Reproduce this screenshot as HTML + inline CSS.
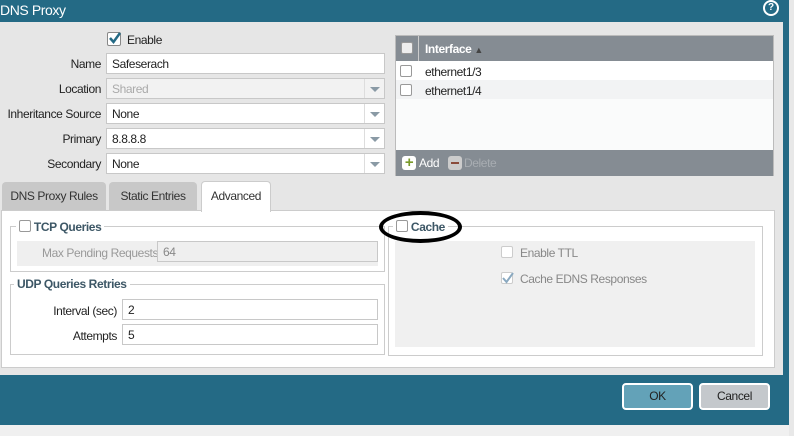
<!DOCTYPE html><html><head><style>
*{box-sizing:border-box;margin:0;padding:0;white-space:nowrap}
body{width:794px;height:436px;overflow:hidden;background:#f0f0f0;font-family:"Liberation Sans",sans-serif;font-size:12px;letter-spacing:-0.4px;color:#222;position:relative}
.a{position:absolute}
.lbl{position:absolute;text-align:right;width:101px;left:0}
.inp{position:absolute;background:#fff;border:1px solid #c8c8c8;padding:3px 5px;height:21px;line-height:14px;overflow:hidden}
.dd{position:absolute;right:0;top:0;width:20px;height:19px;border-left:1px solid #ddd}
.dd:after{content:"";position:absolute;left:5px;top:8px;border:5px solid transparent;border-top:5px solid #8a9aa5}
.cb{position:absolute;width:12px;height:12px;border:1px solid #999;background:#fff;border-radius:2px}
.fs{position:absolute;border:1px solid #ccc}
.leg{position:absolute;background:#fff;font-weight:bold;color:#3d5766;padding:0 3px}
</style></head><body>
<div class="a" style="left:0;top:0;width:783px;height:22px;background:#246a85"></div>
<div class="a" style="left:0;top:2px;color:#fff;font-size:14px">DNS Proxy</div>
<div class="a" style="left:763px;top:0;width:16px;height:16px;border-radius:50%;background:#fff"></div>
<div class="a" style="left:765px;top:2px;width:12px;height:12px;border-radius:50%;background:#246a85;color:#fff;font-weight:bold;font-size:10px;text-align:center;line-height:12px;letter-spacing:0">?</div>
<div class="a" style="left:783px;top:0;width:6px;height:436px;background:#246a85"></div>
<div class="a" style="left:789px;top:0;width:5px;height:436px;background:#e8e8e8"></div>
<div class="a" style="left:0;top:22px;width:783px;height:353px;background:#e6e6e6"></div>
<div class="a" style="left:0;top:375px;width:783px;height:50px;background:#246a85"></div>
<div class="a" style="left:0;top:425px;width:789px;height:11px;background:#f0f0f0"></div>

<div class="cb" style="left:107px;top:32px;width:14px;height:14px;border-color:#888"></div>
<svg class="a" style="left:108px;top:31px" width="14" height="14"><path d="M2 7 L5.5 11 L12 2" stroke="#246a85" stroke-width="2.5" fill="none"/></svg>
<div class="a" style="left:127px;top:33px">Enable</div>

<div class="lbl" style="top:57px">Name</div>
<div class="inp" style="left:106px;top:53px;width:279px">Safeserach</div>
<div class="lbl" style="top:82px">Location</div>
<div class="inp" style="left:106px;top:78px;width:279px;background:#f2f2f2;color:#aaa">Shared<div class="dd"></div></div>
<div class="lbl" style="top:107px">Inheritance Source</div>
<div class="inp" style="left:106px;top:103px;width:279px">None<div class="dd"></div></div>
<div class="lbl" style="top:132px">Primary</div>
<div class="inp" style="left:106px;top:128px;width:279px">8.8.8.8<div class="dd"></div></div>
<div class="lbl" style="top:157px">Secondary</div>
<div class="inp" style="left:106px;top:153px;width:279px">None<div class="dd"></div></div>

<div class="a" style="left:395px;top:35px;width:379px;height:141px;background:#fafbfb;border:1px solid #bbb"></div>
<div class="a" style="left:396px;top:36px;width:377px;height:25px;background:#858c93"></div>
<div class="cb" style="left:401px;top:42px;background:#eee"></div>
<div class="a" style="left:418px;top:36px;width:1px;height:44px;background:#ccc"></div>
<div class="a" style="left:425px;top:42px;color:#fff;font-weight:bold">Interface <span style="font-size:9px;color:#444">▲</span></div>
<div class="a" style="left:396px;top:61px;width:377px;height:19px;background:#fff"></div>
<div class="a" style="left:396px;top:80px;width:377px;height:19px;background:#f2f3f4"></div>
<div class="cb" style="left:400px;top:65px"></div><div class="a" style="left:425px;top:65px">ethernet1/3</div>
<div class="cb" style="left:400px;top:84px"></div><div class="a" style="left:425px;top:84px">ethernet1/4</div>
<div class="a" style="left:396px;top:150px;width:377px;height:26px;background:#858c93"></div>
<div class="a" style="left:402px;top:156px;width:14px;height:14px;border-radius:3px;background:#fff;color:#7a9a2a;font-weight:bold;text-align:center;line-height:14px;font-size:15px">+</div>
<div class="a" style="left:419px;top:156px;color:#fff">Add</div>
<div class="a" style="left:448px;top:156px;width:14px;height:14px;border-radius:3px;background:#ccc"><div style="margin:6px 3px;height:2px;background:#8a4b3b"></div></div>
<div class="a" style="left:464px;top:156px;color:#a8adb2">Delete</div>

<div class="a" style="left:2px;top:182px;width:104px;height:29px;background:#c8c8c8;border-radius:4px 4px 0 0;text-align:center;line-height:28px;color:#333">DNS Proxy Rules</div>
<div class="a" style="left:109px;top:182px;width:88px;height:29px;background:#c8c8c8;border-radius:4px 4px 0 0;text-align:center;line-height:28px;color:#333">Static Entries</div>
<div class="a" style="left:201px;top:181px;width:70px;height:31px;background:#fff;border:1px solid #ccc;border-bottom:none;border-radius:4px 4px 0 0;text-align:center;line-height:28px;color:#333;z-index:2">Advanced</div>
<div class="a" style="left:1px;top:210px;width:774px;height:158px;background:#fff;border:1px solid #ccc"></div>

<div class="fs" style="left:10px;top:226px;width:375px;height:46px"></div>
<div class="a" style="left:17px;top:241px;width:361px;height:25px;background:#efefef"></div>
<div class="a" style="left:42px;top:246px;color:#999">Max Pending Requests</div>
<div class="inp" style="left:157px;top:241px;width:221px;background:#efefef;color:#888">64</div>
<div class="leg" style="left:16px;top:219px"><span class="cb" style="position:relative;display:inline-block;top:1px"></span> TCP Queries</div>

<div class="fs" style="left:10px;top:284px;width:375px;height:71px"></div>
<div class="leg" style="left:14px;top:277px">UDP Queries Retries</div>
<div class="a" style="left:20px;top:304px;width:97px;text-align:right">Interval (sec)</div>
<div class="inp" style="left:122px;top:299px;width:256px">2</div>
<div class="a" style="left:20px;top:329px;width:97px;text-align:right">Attempts</div>
<div class="inp" style="left:122px;top:324px;width:256px">5</div>

<div class="fs" style="left:388px;top:226px;width:375px;height:130px"></div>
<div class="a" style="left:395px;top:241px;width:360px;height:106px;background:#f0f0f0"></div>
<div class="leg" style="left:393px;top:219px"><span class="cb" style="position:relative;display:inline-block;top:1px"></span> Cache</div>
<div class="cb" style="left:501px;top:246px;border-color:#ccc"></div><div class="a" style="left:520px;top:246px;color:#888">Enable TTL</div>
<div class="cb" style="left:501px;top:272px;border-color:#ccc"></div>
<svg class="a" style="left:501px;top:271px" width="14" height="14"><path d="M2 7 L5.5 11 L12 2" stroke="#8aa9c0" stroke-width="2" fill="none"/></svg>
<div class="a" style="left:520px;top:272px;color:#888">Cache EDNS Responses</div>
<div class="a" style="left:379px;top:211px;width:83px;height:32px;border:4px solid #000;border-radius:50%"></div>

<div class="a" style="left:622px;top:383px;width:71px;height:27px;background:#63a2b8;border:2px solid #fff;border-radius:4px;text-align:center;line-height:23px">OK</div>
<div class="a" style="left:699px;top:383px;width:71px;height:27px;background:#c4c8cc;border:2px solid #fff;border-radius:4px;text-align:center;line-height:23px">Cancel</div>
</body></html>
